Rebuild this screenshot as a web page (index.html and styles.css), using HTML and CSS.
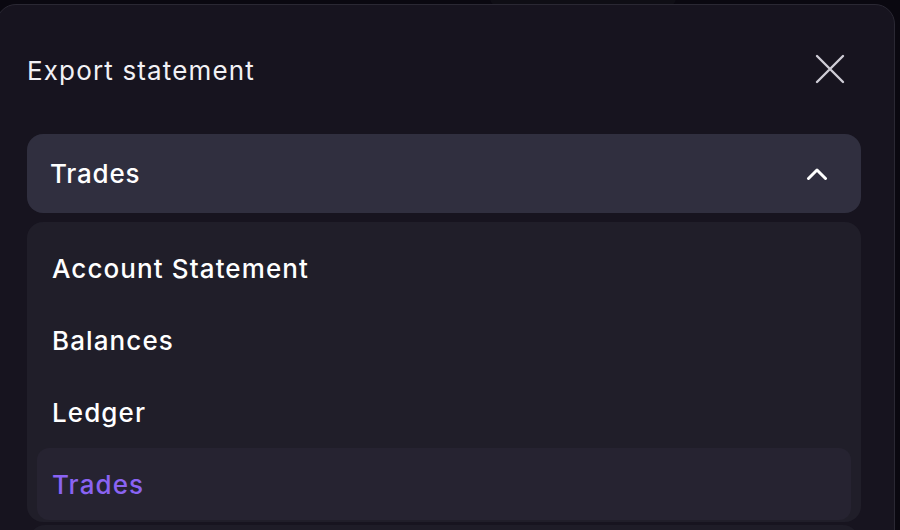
FILE: index.html
```html
<!DOCTYPE html>
<html lang="en">
<head>
<meta charset="utf-8">
<title>Export statement</title>
<link rel="stylesheet" href="styles.css">
</head>
<body>
<div class="backdrop-handle"></div>
<div class="modal">
  <div class="modal-header">
    <h2 class="modal-title">Export statement</h2>
    <button class="close-btn" aria-label="Close">
      <svg width="30" height="30" viewBox="0 0 30 30" fill="none">
        <path d="M2 2 L28 28 M28 2 L2 28" stroke="#cfcdd6" stroke-width="2.4" stroke-linecap="round"/>
      </svg>
    </button>
  </div>
  <div class="select">
    <span class="select-value">Trades</span>
    <svg class="chevron" width="22" height="12" viewBox="0 0 22 12" fill="none">
      <path d="M2.5 10.5 L11 2 L19.5 10.5" stroke="#ffffff" stroke-width="3" stroke-linecap="round" stroke-linejoin="round"/>
    </svg>
  </div>
  <div class="options">
    <div class="option">Account Statement</div>
    <div class="option">Balances</div>
    <div class="option">Ledger</div>
    <div class="option option-selected">Trades</div>
  </div>
  <div class="next-field"></div>
</div>
</body>
</html>
```
FILE: styles.css
```css
html, body {
  margin: 0;
  padding: 0;
  height: 530px;
  overflow: hidden;
  background: #0a0810;
  font-family: "Inter", "Liberation Sans", sans-serif;
}

.backdrop-handle {
  position: absolute;
  left: 490px;
  top: -10px;
  width: 186px;
  height: 16px;
  border-radius: 12px;
  background: #0f0e15;
}

.modal {
  position: relative;
  box-sizing: border-box;
  width: 899px;
  margin: 4px 0 0 -4px;
  min-height: 620px;
  padding: 0 33px 0 30px;
  background: #17141f;
  border: 1px solid #2a2833;
  border-radius: 20px;
}

.modal-header {
  display: flex;
  align-items: center;
  justify-content: space-between;
  height: 40px;
  padding-top: 45px;
  margin-bottom: 44px;
}

.modal-title {
  margin: 0;
  font-size: 26px;
  font-weight: 400;
  color: #f2f1f5;
  letter-spacing: 1.15px;
}

.close-btn {
  display: flex;
  align-items: center;
  justify-content: center;
  width: 30px;
  height: 30px;
  padding: 0;
  margin-right: 16px;
  margin-top: -2px;
  background: none;
  border: none;
}

.select {
  display: flex;
  align-items: center;
  justify-content: space-between;
  box-sizing: border-box;
  height: 79px;
  padding: 0 33px 0 23px;
  background: #302f3f;
  border-radius: 16px;
}

.select-value {
  font-size: 26px;
  font-weight: 500;
  color: #ffffff;
  letter-spacing: 0.8px;
}

.chevron {
  display: block;
  margin-top: 1px;
}

.options {
  box-sizing: border-box;
  height: 300px;
  margin-top: 9px;
  padding: 10px 10px 0;
  background: #201e29;
  border-radius: 16px;
  overflow: hidden;
}

.option {
  display: flex;
  align-items: center;
  height: 72px;
  padding-left: 15px;
  font-size: 26px;
  font-weight: 500;
  color: #ffffff;
  letter-spacing: 1.1px;
  border-radius: 12px;
}

.option-selected {
  background: #262331;
  color: #8a63f3;
}

.next-field {
  height: 60px;
  margin-top: 3px;
  margin-left: 2px;
  margin-right: 2px;
  background: #1e1c27;
  border-radius: 16px;
}
```
